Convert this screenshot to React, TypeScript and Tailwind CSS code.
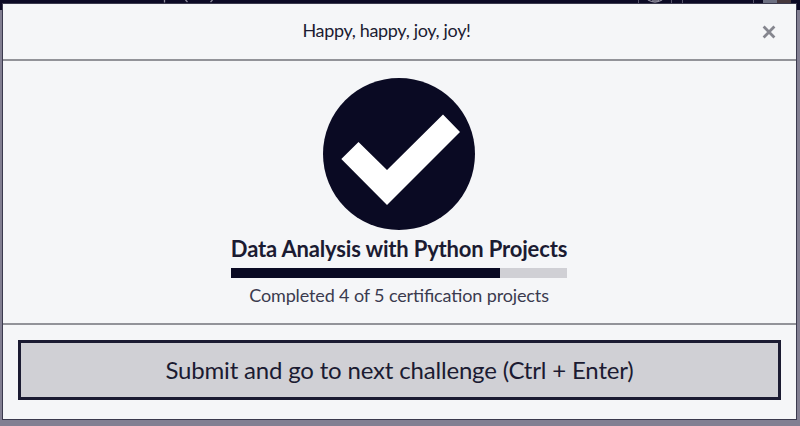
import React from "react";

function PageBehind() {
  return (
    <div className="flex h-[10px] w-full items-start overflow-hidden bg-[#0c0a25]">
      <svg viewBox="0 0 800 10" className="h-[10px] w-[800px]" fill="none" stroke="#8e8c9c" strokeWidth="1.3">
        <path d="M164.5 0V2.5M185.5 0 187.5 2M210.5 2 212.5 0" />
        <path d="M638.5 0V3M671.5 0V3M682.5 0V3M753.5 0V3" stroke="#55536a" strokeWidth="1" />
        <path d="M648 0Q655 4 662 0M652 0H659" />
        <path d="M763 0H777V3H763Z" fill="#6d7082" stroke="none" />
        <path d="M777 0H791V3H777Z" fill="#46383d" stroke="none" />
      </svg>
    </div>
  );
}

export default function App() {
  return (
    <div className="relative h-[426px] w-[800px] overflow-hidden bg-[#827f92] font-['Lato',sans-serif] text-[#1b1b32]">
      <PageBehind />
      <section
        role="dialog"
        className="absolute left-[2px] top-[3px] flex h-[417px] w-[795px] flex-col border border-[#3b3a4e] bg-[#f5f6f8]"
      >
        <header className="flex h-[57px] shrink-0 items-center border-b-2 border-[#929399] pr-[20px]">
          <h2 className="flex-1 pb-[3px] pl-[8px] text-center text-[18px] leading-[26px] tracking-[-0.33px]">
            Happy, happy, joy, joy!
          </h2>
          <button aria-label="Close" className="h-[14px] w-[14px]">
            <svg viewBox="0 0 14 14" className="block h-[14px] w-[14px]" fill="none" stroke="#85868f" strokeWidth="2.8">
              <path d="M1.6 1.6 12.4 12.4M12.4 1.6 1.6 12.4" />
            </svg>
          </button>
        </header>
        <div className="flex h-[264px] shrink-0 flex-col items-center border-b-2 border-[#929399] pr-px pt-[16.5px]">
          <svg viewBox="0 0 152 152" className="h-[152px] w-[152px] shrink-0">
            <circle cx="76" cy="76" r="76" fill="#0a0a23" />
            <path d="M18.3 81 35.5 64 64 92 120 36.5 137 54 64 127Z" fill="#fff" />
          </svg>
          <div className="mt-[5.5px] flex w-[336px] flex-col items-center">
            <h3 className="whitespace-nowrap text-[22px] font-bold leading-[28px] tracking-[-0.17px]">
              Data Analysis with Python Projects
            </h3>
            <div className="mt-[5px] h-[10px] w-full bg-[#d0d0d5]">
              <div className="h-full w-[80%] bg-[#0a0a23]" />
            </div>
            <p className="mt-[4px] whitespace-nowrap text-[18px] leading-[26px] tracking-[-0.13px] text-[#3b3b4f] [font-feature-settings:'liga']">
              Completed 4 of 5 certification projects
            </p>
          </div>
        </div>
        <footer className="flex flex-1 items-start justify-center px-[15px] pt-[15px]">
          <button className="h-[60px] w-full border-[3px] border-[#1b1b32] bg-[#d0d0d5] text-[24px] leading-[30px] tracking-[-0.18px]">
            Submit and go to next challenge (Ctrl + Enter)
          </button>
        </footer>
      </section>
    </div>
  );
}
